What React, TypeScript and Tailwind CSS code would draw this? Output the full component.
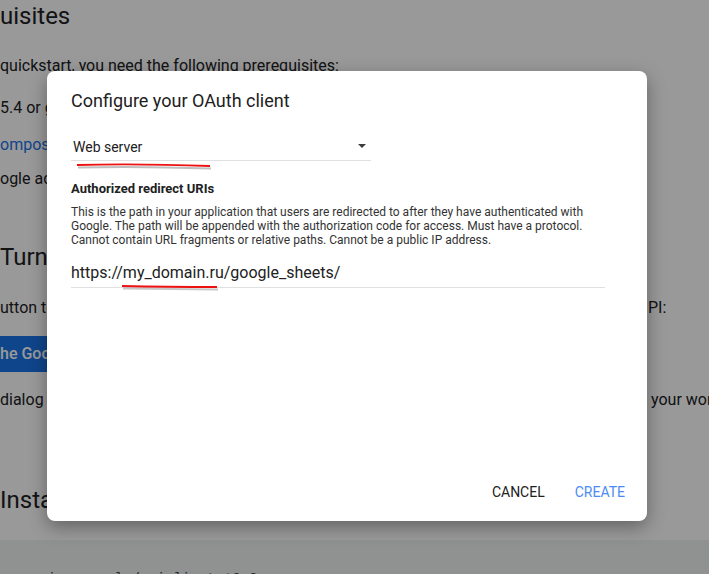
import React from 'react';

const font = "font-['Roboto','Liberation_Sans',sans-serif]";

export default function App() {
  return (
    <div className={`relative w-[709px] h-[574px] overflow-hidden bg-white text-[#202124] ${font}`}>
      {/* Page behind the dialog */}
      <BackgroundPage />

      {/* Scrim */}
      <div className="absolute inset-0 bg-black/40" />

      {/* Dialog */}
      <div className="absolute left-[47px] top-[71px] w-[600px] h-[450px] rounded-lg bg-white shadow-[0_6px_18px_rgba(0,0,0,0.35)] flex flex-col">
        <h2 className="pl-6 pt-[18px] text-[18px] leading-6 font-normal text-[#212121]">
          Configure your OAuth client
        </h2>

        <div className="ml-6 mt-[15px] w-[300px] flex items-center justify-between border-b border-[#e0e0e0] pt-[9px] pb-[3px] pl-[2px] pr-[5px]">
          <span className="text-[14px] leading-5 text-[#212121]">Web server</span>
          <svg width="8" height="4" viewBox="0 0 8 4" className="mb-[2px]">
            <path d="M0 0 L8 0 L4 4 Z" fill="#3c3c3c" />
          </svg>
        </div>

        <p className="ml-6 mt-[20px] text-[13px] leading-4 font-bold text-[#212121]">
          Authorized redirect URIs
        </p>
        <p className="ml-6 mt-[8px] text-[12px] leading-[14px] text-[#333333] whitespace-nowrap">
          This is the path in your application that users are redirected to after they have authenticated with
          <br />
          Google. The path will be appended with the authorization code for access. Must have a protocol.
          <br />
          Cannot contain URL fragments or relative paths. Cannot be a public IP address.
        </p>

        <div className="ml-6 mt-[14px] w-[534px] border-b border-[#e0e0e0] pb-[2px]">
          <span className="text-[16px] leading-6 text-[#212121]">https://my_domain.ru/google_sheets/</span>
        </div>

        <div className="mt-auto flex justify-end gap-[30px] pr-[22px] pb-[11px]">
          <button className="h-9 text-[14px] text-[#212121] uppercase">Cancel</button>
          <button className="h-9 text-[14px] text-[#4c8bf5] uppercase">Create</button>
        </div>

        {/* red hand-drawn marks */}
        <svg className="absolute left-0 top-0 pointer-events-none" width="600" height="450">
          <path d="M31 96.5 Q90 95 164 97.5" stroke="rgba(0,0,0,0.25)" strokeWidth="2" fill="none" />
          <path d="M30 94 Q90 92.5 163 95" stroke="#ee1111" strokeWidth="1.8" fill="none" />
          <path d="M76 217.5 Q120 218 171 218.5" stroke="rgba(0,0,0,0.22)" strokeWidth="2" fill="none" />
          <path d="M75 215 Q120 216 170 216" stroke="#ee1111" strokeWidth="1.8" fill="none" />
        </svg>
      </div>
    </div>
  );
}

function BackgroundPage() {
  return (
    <div className="flex flex-col">
      <h1 className="text-[24px] leading-8 font-normal whitespace-nowrap">uisites</h1>
      <p className="mt-[22px] text-[16px] leading-6 whitespace-nowrap">
        quickstart, you need the following prerequisites:
      </p>
      <p className="mt-[18px] text-[16px] leading-6 whitespace-nowrap">
        5.4 or greater with the command-line interface (CLI) and JSON extension installed
      </p>
      <p className="mt-[13px] text-[16px] leading-6 whitespace-nowrap text-[#1a73e8]">
        omposer dependency management tool
      </p>
      <p className="mt-[10px] text-[16px] leading-6 whitespace-nowrap">
        ogle account
      </p>
      <h2 className="mt-[50px] text-[24px] leading-8 font-normal whitespace-nowrap">
        Turn on the Google Sheets API
      </h2>
      <p className="mt-[23px] flex text-[16px] leading-6 whitespace-nowrap">
        <span className="w-[648px] shrink-0 overflow-hidden">utton to create a new Cloud Platform project and automatically enable the Google</span>
        <span>PI:</span>
      </p>
      <div className="mt-[16px] h-9 w-[260px] bg-[#1a73e8] flex items-center">
        <span className="text-[16px] font-medium text-white whitespace-nowrap">he Google Sheets API</span>
      </div>
      <p className="mt-[16px] flex text-[16px] leading-6 whitespace-nowrap">
        <span className="w-[651px] shrink-0 overflow-hidden">dialog click DOWNLOAD CLIENT CONFIGURATION and save the file</span>
        <span>your working directory.</span>
      </p>
      <h2 className="mt-[72px] text-[24px] leading-8 font-normal whitespace-nowrap">
        Install the client library
      </h2>
      <div className="mt-[24px] h-[60px] bg-[#f1f3f4] pt-[26px]">
        <span className="ml-[-3px] font-['Liberation_Mono',monospace] text-[14px] text-[#37474f] whitespace-nowrap">
          r require google/apiclient:^2.0
        </span>
      </div>
    </div>
  );
}
